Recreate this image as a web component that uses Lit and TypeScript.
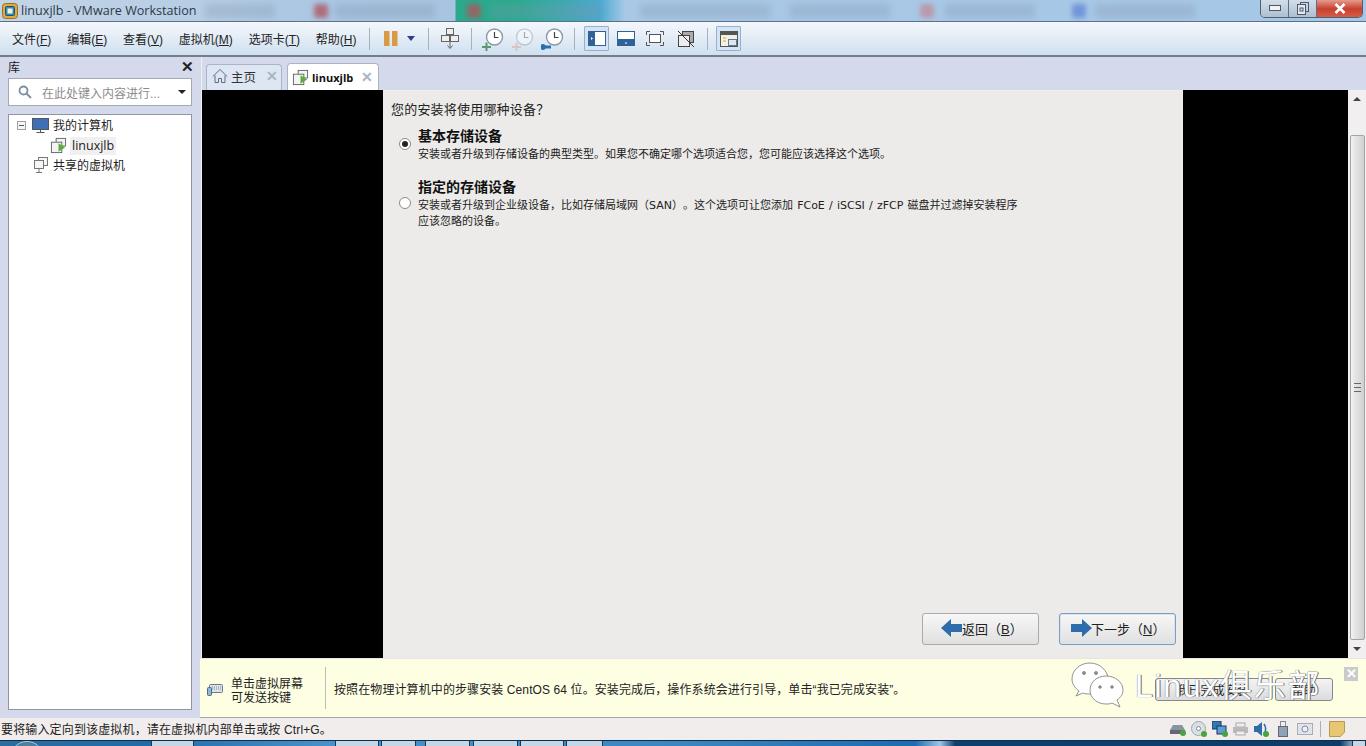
import { LitElement, html, css, svg } from "lit";
import { customElement } from "lit/decorators.js";

const vmIcon = (s = 18) => html`<svg width=${s} height=${s} viewBox="0 0 18 18" fill="none">
  <rect x="6.5" y="1.5" width="10" height="8" fill="#f4f4f4" stroke="#666"/>
  <rect x="1.5" y="5.5" width="11" height="11" fill="#f4f4f4" stroke="#666"/>
  <path d="M9 6.5v9l7-4.5z" fill="#5aaf3c"/>
</svg>`;

const clock = (c: string, badge: unknown, o = 1) => html`<svg width="24" height="24" viewBox="0 0 24 24" fill="none" style=${"opacity:" + o}>
  <circle cx="13.5" cy="10" r="8" fill="#fff" stroke="#8b99a8" stroke-width="1.4"/>
  <path d="M13.5 5v5.5h4" stroke="#444" stroke-width="1.2"/>
  <g stroke=${c} fill=${c}>${badge}</g>
</svg>`;

@customElement("app-root")
export class AppRoot extends LitElement {
  static styles = css`
    :host { display: block; width: 1366px; height: 746px; overflow: hidden; font-family: "Liberation Sans", "Noto Sans CJK SC", sans-serif; font-size: 12px; color: #1a1a1a; text-spacing-trim: space-all; }
    .page { display: flex; flex-direction: column; height: 746px; background: #d4d9ec; }
    .title { height: 21px; flex: none; display: flex; align-items: center; position: relative; overflow: hidden; padding-left: 2px; gap: 3px;
      background: linear-gradient(90deg, #c4d4e6 0, #b6cde4 200px, #a9c6e2 330px, #a8c4e0 455px, #2aa98c 456px, #28ab8e 520px, #4aa9d0 600px, #a9c8e6 625px, #a6c7e6 1260px); border-bottom: 1px solid #5c7086; }
    .app-ico { width: 16px; height: 16px; flex: none; }
    .title-text { font-family: "Open Sans", "Noto Sans", sans-serif; font-size: 12.6px; color: #2c3a48; white-space: nowrap; }
    .blur { position: absolute; top: 4px; height: 14px; border-radius: 3px; background: #7f93ad; opacity: .3; filter: blur(3px); }
    .dot { position: absolute; top: 4px; width: 14px; height: 14px; border-radius: 3px; filter: blur(2.5px); opacity: .75; }
    .winbtns { position: absolute; right: 3px; top: -1px; width: 101px; height: 18px; display: flex; border: 1px solid #4e5f72; border-top: 0; border-radius: 0 0 5px 5px; overflow: hidden; }
    .wb { width: 27px; display: flex; align-items: center; justify-content: center; background: linear-gradient(#d4e0ec, #aebfd1); border-right: 1px solid #5d6f84; }
    .wb.close { flex: 1; border: 0; background: linear-gradient(#e8a598, #c8402e 55%, #d55c48); }
    .toolbar { height: 33px; flex: none; display: flex; align-items: center; padding-left: 12px; background: linear-gradient(#f4f7fd, #ecf2f9 25%, #cfe0f0); border-bottom: 2px solid #777d88; }
    .menu { display: flex; gap: 15.8px; font-size: 12px; color: #222; white-space: nowrap; }
    u { text-underline-offset: 1px; }
    .sep { width: 1px; height: 22px; background: #a3b2c2; flex: none; }
    .tools { display: flex; align-items: center; margin-left: 13px; height: 100%; }
    .tb { width: 24px; height: 24px; display: flex; align-items: center; justify-content: center; flex: none; box-sizing: border-box; }
    .tb.on { width: 25px; height: 25px; background: #d5e4f4; border: 1px solid #97b0cb; border-radius: 1px; }
    .tb.pause { width: 22px; margin-left: 10px; }
    .tb.drop { width: 18px; }
    .tb.gap5 { margin-left: 5px; }
    .tb.gap7 { margin-left: 7px; }
    .tb.gapr { margin-right: 6px; }
    .s8 { margin: 0 9px 0 8px; }
    .s9 { margin: 0 9px; }
    .s9b { margin: 0 8px 0 9px; }
    .drop-arrow { border: 4px solid transparent; border-top: 5px solid #2b3f8a; border-bottom: 0; }
    .body { flex: 1; min-height: 0; display: flex; }
    .side { width: 202px; flex: none; display: flex; flex-direction: column; background: #d4d9ec; border-right: 1px solid #f1f0f0; box-sizing: border-box; padding: 0 9px 8px 8px; }
    .side-head { height: 21px; box-sizing: border-box; padding-bottom: 2px; display: flex; align-items: center; justify-content: space-between; font-size: 12px; margin-right: -2px; }
    .side-x { font-size: 15px; font-weight: 700; color: #222; line-height: 1; }
    .search { height: 28px; box-sizing: border-box; border: 1px solid #a4a8b3; background: #fff; display: flex; align-items: center; padding: 0 5px 0 9px; color: #8b8b8b; gap: 10px; font-size: 12px; margin-bottom: 8px; }
    .search span { flex: 1; white-space: nowrap; }
    .caret { width: 0; height: 0; border: 4px solid transparent; border-top: 4px solid #222; border-bottom: 0; flex: none; }
    .tree { flex: 1; border: 1px solid #8f96a3; background: #fff; padding: 0 0 0 8px; color: #222; }
    .row { height: 20px; display: flex; align-items: center; gap: 4px; white-space: nowrap; }
    .row span { margin-bottom: 2px; }
    .row.sub { padding-left: 33px; }
    .row.sub em { font-style: normal; background: #f0f0f0; padding: 0 2px; margin: 2px 0 0 -1px; font-family: "Open Sans", sans-serif; font-size: 12.5px; line-height: 18px; }
    .row.third { padding-left: 15px; }
    .minus { width: 7px; height: 7px; border: 1px solid #a0a0a0; display: flex; align-items: center; justify-content: center; background: #f6f6f6; margin-right: 2px; flex: none; }
    .minus::after { content: ""; width: 5px; height: 1px; background: #555; }
    .main { flex: 1; min-width: 0; display: flex; flex-direction: column; }
    .tabs { height: 33px; flex: none; display: flex; align-items: flex-end; gap: 5px; padding-left: 4px; background: #d4d9ec; }
    .tab { height: 26px; box-sizing: border-box; display: flex; align-items: center; border: 1px solid #a9b4c6; border-bottom: 0; border-radius: 4px 4px 0 0; background: #dde6f2; padding: 0 3px 3px 5px; gap: 3px; font-size: 12.5px; color: #333; white-space: nowrap; }
    .tab.on { height: 27px; width: 92px; background: #fff; font-weight: 700; font-size: 11px; padding: 0 5px 0 4px; gap: 3px; font-family: "Open Sans", sans-serif; color: #111; }
    .tab b { color: #a9b4c2; font-size: 14px; margin-left: auto; font-weight: 700; font-family: "Liberation Sans", sans-serif; }
    .tab.home { width: 76px; }
    .vmrow { flex: 1; min-height: 0; display: flex; }
    .black { background: #000; flex: none; }
    .b1 { width: 181px; }
    .b2 { width: 165px; }
    .guest { width: 800px; flex: none; box-sizing: border-box; background: #ecebe9; border-top: 1px solid #f3efe9; display: flex; flex-direction: column; padding: 11px 7px 13px 8px; font-size: 12px; }
    .q { font-size: 13px; line-height: 16px; color: #222; letter-spacing: .2px; }
    .opt { display: flex; margin-top: 10px; padding-left: 8px; }
    .opt.two { margin-top: 16px; }
    .radio { width: 12px; height: 12px; box-sizing: border-box; border-radius: 50%; border: 1px solid #8b8b8b; background: #fff; flex: none; display: flex; align-items: center; justify-content: center; margin: 10px 7px 0 0; }
    .opt.two .radio { margin-top: 18px; }
    .radio i { width: 6px; height: 6px; border-radius: 50%; background: #222; }
    .opt h4 { margin: 0; font-size: 14px; line-height: 16px; font-weight: 700; color: #111; }
    .opt p { margin: 3px 0 0; font-family: "DejaVu Sans", "Noto Sans CJK SC", sans-serif; font-size: 11px; word-spacing: .7px; line-height: 16px; color: #222; white-space: nowrap; }
    .btns { margin-top: auto; display: flex; justify-content: flex-end; gap: 20px; }
    .btn { height: 32px; width: 117px; box-sizing: border-box; border: 1px solid #aaa; border-radius: 3px; background: linear-gradient(#f7f7f7, #e0e0e0); display: flex; align-items: center; font-size: 13px; padding: 0 0 2px 18px; color: #222; white-space: nowrap; }
    .btn svg { margin-right: -1px; }
    .btn.next { border-color: #7d9cc0; padding-left: 10px; box-shadow: inset 0 0 0 1px #d8e4f0; }
    .scroll { flex: 1; display: flex; flex-direction: column; background: #f1efef; align-items: center; }
    .sarrow { height: 18px; display: flex; align-items: center; justify-content: center; flex: none; }
    .up { width: 0; height: 0; border: 4px solid transparent; border-bottom: 4px solid #444; border-top: 0; }
    .down { width: 0; height: 0; border: 4px solid transparent; border-top: 4px solid #444; border-bottom: 0; }
    .thumb { margin-top: 27px; flex: 1; width: 15px; border: 1px solid #a4a4a4; border-radius: 2px; background: linear-gradient(90deg, #f3f3f3, #e6e6e6 30%, #d0d0d0); display: flex; align-items: center; justify-content: center; box-sizing: border-box; }
    .grip { width: 7px; height: 7px; border-top: 1px solid #666; border-bottom: 1px solid #666; position: relative; }
    .grip::after { content: ""; position: absolute; left: 0; right: 0; top: 3px; height: 1px; background: #666; }
    .hint { height: 60px; flex: none; box-sizing: border-box; background: #fefee2; border-top: 1px solid #e6e6e0; border-bottom: 1px solid #a5a5a5; display: flex; align-items: center; position: relative; padding-left: 7px; margin-left: -2px; }
    .kb { flex: none; width: 16px; height: 14px; margin: 2px 8px 0 0; }
    .h1 { width: 94px; flex: none; line-height: 14px; font-size: 12px; color: #222; margin-top: 6px; }
    .hsep { width: 1px; height: 42px; background: #bcbcb0; margin-right: 8px; flex: none; }
    .h2 { font-size: 12px; color: #222; white-space: nowrap; letter-spacing: .1px; }
    .mark { position: absolute; left: 871px; top: 2px; display: flex; align-items: center; gap: 8px; }
    .wm { font-size: 32px; color: #fff; white-space: nowrap; letter-spacing: 1.7px; font-weight: 400; text-shadow: 0 0 1px #555, 1px 0 0 #777; line-height: 50px; }
    .hb { position: absolute; top: 19px; height: 23px; box-sizing: border-box; border: 1px solid #888; border-radius: 3px; background: linear-gradient(#f4f4f4, #dcdcdc); font-size: 12px; display: flex; align-items: center; justify-content: center; color: #222; white-space: nowrap; }
    .hb.a { left: 955px; width: 115px; }
    .hb.b { left: 1075px; width: 58px; }
    .hx { position: absolute; left: 1144px; top: 8px; width: 14px; height: 14px; background: #c9cbcb; color: #fff; font: 700 13px/14px "Liberation Sans", sans-serif; text-align: center; }
    .status { height: 22px; flex: none; box-sizing: border-box; background: #f1eded; display: flex; align-items: center; padding: 0 0 1px 1px; font-size: 12px; letter-spacing: .15px; color: #222; white-space: nowrap; }
    .status span { flex: 1; }
    .sicons { display: flex; align-items: center; gap: 5px; padding-right: 21px; }
    .usb { margin: 0 4px; }
    .ssep { height: 16px; margin: 0 3px 0 2px; }
    .task { height: 6px; flex: none; position: relative; overflow: hidden; background: linear-gradient(90deg, #2c6d9f, #206ba8 150px, #4993cc 335px, #3a86c2 680px, #1d6bb0 915px, #9cc6e6 940px, #0e3f6c 955px, #0e3f6c 1000px, #0d3c69 1340px, #7893ab 1350px); border-top: 1px solid #0f2e49; box-sizing: border-box; }
    .orb { position: absolute; left: 10px; top: 0; width: 32px; height: 32px; border-radius: 50%; background: radial-gradient(#e87a3a, #3a7fa8 70%); border: 1px solid #a9c8de; }
    .tk { position: absolute; top: 0; height: 6px; background: #c5d6e4; border-left: 1px solid #1b3850; border-right: 1px solid #1b3850; box-sizing: border-box; }
    .ww { flex: none; }
  `;

  render() {
    const menus: [string, string][] = [["文件", "F"], ["编辑", "E"], ["查看", "V"], ["虚拟机", "M"], ["选项卡", "T"], ["帮助", "H"]];
    const blurs = [[205, 70], [335, 100], [490, 110], [640, 130], [790, 100], [945, 90], [1095, 100]];
    const dots: [number, string][] = [[314, "#b0505a"], [467, "#b8505a"], [920, "#c08a98"], [1072, "#5f86d6"]];
    const tks = [[151, 43], [335, 44], [381, 35], [425, 45], [473, 45], [520, 44], [566, 37], [1352, 14]];
    return html`<div class="page">
      <div class="title">
        <svg class="app-ico" viewBox="0 0 16 16"><rect x=".5" y=".5" width="15" height="15" rx="3" fill="#e4a93a" stroke="#94712c"/><rect x="3.5" y="3.5" width="9" height="9" rx="1" fill="#2c8fb8" stroke="#24506e"/><rect x="5.5" y="5.5" width="5" height="5" fill="#f2f2e0"/></svg>
        <span class="title-text">linuxjlb - VMware Workstation</span>
        ${blurs.map(([l, w]) => html`<div class="blur" style="left:${l}px;width:${w}px"></div>`)}
        ${dots.map(([l, c]) => html`<div class="dot" style="left:${l}px;background:${c}"></div>`)}
        <div class="winbtns">
          <div class="wb"><svg width="12" height="6"><rect x=".5" y=".5" width="11" height="5" fill="#f2f2f2" stroke="#4b5968"/></svg></div>
          <div class="wb"><svg width="12" height="13" viewBox="0 0 12 13" fill="none" stroke="#4b5968"><rect x="3.5" y=".5" width="8" height="9"/><rect x=".5" y="2.5" width="8" height="10" fill="#e3e8ee"/><rect x="3" y="6" width="3" height="3"/></svg></div>
          <div class="wb close"><svg width="12" height="11" viewBox="0 0 12 11"><path d="M1.5 1 10.5 10M10.5 1 1.5 10" stroke="#fff" stroke-width="2.6"/></svg></div>
        </div>
      </div>
      <div class="toolbar">
        <div class="menu">${menus.map(([t, k]) => html`<span>${t}(<u>${k}</u>)</span>`)}</div>
        <div class="tools">
          <div class="sep"></div>
          <div class="tb pause"><svg width="14" height="15"><rect x="0" y="0" width="5.5" height="15" fill="#d99a45"/><rect x="8" y="0" width="5.5" height="15" fill="#d99a45"/></svg></div>
          <div class="tb drop"><div class="drop-arrow"></div></div>
          <div class="sep s8"></div>
          <div class="tb"><svg width="20" height="22" viewBox="0 0 20 22" fill="none" stroke="#666"><rect x="6.5" y=".5" width="7" height="6" fill="#eee"/><rect x="1.5" y="7.5" width="8" height="6" fill="#eee"/><rect x="10.5" y="7.5" width="8" height="6" fill="#eee"/><path d="M10 14v6M7.500 17.500l2.500 3 2.500-3"/></svg></div>
          <div class="sep s9"></div>
          <div class="tb gapr">${clock("#5a9a6a", svg`<path d="M1 20h9M5.500 15.500v9" stroke-width="2"/>`)}</div>
          <div class="tb gapr">${clock("#d89870", svg`<path d="M1 20h9M5.500 15.500v9" stroke-width="2"/>`, .4)}</div>
          <div class="tb">${clock("#2a6eb0", svg`<path d="M1 20h9" stroke-width="3"/><circle cx="2" cy="20" r="2.500"/>`)}</div>
          <div class="sep s9"></div>
          <div class="tb on"><svg width="18" height="15"><rect x=".5" y=".5" width="17" height="14" fill="#fff" stroke="#2f6296"/><rect width="7" height="15" fill="#2f6296"/><path d="M3 6v3l2-1.500z" fill="#fff"/></svg></div>
          <div class="tb gap5"><svg width="18" height="15"><rect x=".5" y=".5" width="17" height="14" fill="#fff" stroke="#2f6296"/><rect y="8" width="18" height="7" fill="#2f6296"/><path d="M7.500 12.500h3L9 11z" fill="#fff"/></svg></div>
          <div class="tb gap5"><svg width="18" height="15" fill="none" stroke="#555"><rect x="3.500" y="3.500" width="11" height="8" fill="#fff"/><path d="M.5 4V.5H4M14 .5h3.500V4M17.500 11v3.500H14M4 14.500H.5V11"/></svg></div>
          <div class="tb gap7"><svg width="18" height="18" fill="none" stroke="#444"><rect x="5.500" y="1.500" width="11" height="11" fill="#aaa"/><rect x="1.500" y="5.500" width="11" height="11" fill="#eee"/><path d="M1 1l16 16" stroke="#333"/></svg></div>
          <div class="sep s9b"></div>
          <div class="tb on"><svg width="18" height="16" fill="none"><rect x=".5" y=".5" width="17" height="15" fill="#f4f0e2" stroke="#555"/><rect x="1" y="1" width="16" height="3" fill="#555"/><rect x="8.500" y="8.500" width="8" height="6" fill="#dfe6ee" stroke="#5b7a99"/><path d="M3 7h3M3 10h3" stroke="#d4a44a"/></svg></div>
        </div>
      </div>
      <div class="body">
        <div class="side">
          <div class="side-head"><span>库</span><span class="side-x">✕</span></div>
          <div class="search">
            <svg width="14" height="14" viewBox="0 0 14 14" fill="none" stroke="#7c8ea3" stroke-width="1.800"><circle cx="5.500" cy="5.500" r="4"/><path d="M8.500 8.500 13 13"/></svg>
            <span>在此处键入内容进行...</span><div class="caret"></div>
          </div>
          <div class="tree">
            <div class="row"><div class="minus"></div><svg width="17" height="17" viewBox="0 0 17 17"><rect x=".5" y="1.500" width="16" height="11" fill="#3f6fb5" stroke="#555"/><path d="M8.500 12.500v3M4.500 15.500h8" stroke="#555"/></svg><span>我的计算机</span></div>
            <div class="row sub">${vmIcon(17)}<em>linuxjlb</em></div>
            <div class="row third"><svg width="17" height="18" viewBox="0 0 17 18" fill="none" stroke="#777"><rect x="6.500" y="1.500" width="9" height="8" fill="#f6f6f6"/><rect x="2.500" y="4.500" width="9" height="8" fill="#f6f6f6"/><path d="M7 12.500v4M4 16.500h6"/></svg><span>共享的虚拟机</span></div>
          </div>
        </div>
        <div class="main">
          <div class="tabs">
            <div class="tab home"><svg width="16" height="16" viewBox="0 0 16 16" fill="none" stroke="#5d6e80"><path d="M.8 8.500 8 1.500l7.200 7M3 7.500v7h3.500v-4h3v4H13v-7"/></svg><span>主页</span><b>✕</b></div>
            <div class="tab on">${vmIcon(17)}<span>linuxjlb</span><b>✕</b></div>
          </div>
          <div class="vmrow">
            <div class="black b1"></div>
            <div class="guest">
              <div class="q">您的安装将使用哪种设备？</div>
              <div class="opt"><div class="radio"><i></i></div><div><h4>基本存储设备</h4><p>安装或者升级到存储设备的典型类型。如果您不确定哪个选项适合您，您可能应该选择这个选项。</p></div></div>
              <div class="opt two"><div class="radio"></div><div><h4>指定的存储设备</h4><p>安装或者升级到企业级设备，比如存储局域网（SAN）。这个选项可让您添加 FCoE / iSCSI / zFCP 磁盘并过滤掉安装程序<br>应该忽略的设备。</p></div></div>
              <div class="btns">
                <div class="btn back"><svg width="22" height="20" viewBox="0 0 22 20"><path d="M0 10 10 1v5h11v8H10v5z" fill="#2f6cab"/></svg><span>返回（<u>B</u>）</span></div>
                <div class="btn next"><svg width="22" height="20" viewBox="0 0 22 20"><path d="M22 10 12 1v5H1v8h11v5z" fill="#2f6cab"/></svg><span>下一步（<u>N</u>）</span></div>
              </div>
            </div>
            <div class="black b2"></div>
            <div class="scroll">
              <div class="sarrow"><div class="up"></div></div>
              <div class="thumb"><div class="grip"></div></div>
              <div class="sarrow"><div class="down"></div></div>
            </div>
          </div>
          <div class="hint">
            <svg class="kb" viewBox="0 0 16 14"><rect x="2.500" y="2.500" width="13" height="8" rx="1" fill="#dde3e8" stroke="#6b7b8a"/><rect x=".5" y="5.500" width="4" height="8" rx="1" fill="#8fb7d6" stroke="#4a6b88"/><path d="M5 5h9M5 7h9" stroke="#7f8e9c" stroke-dasharray="1 1"/></svg>
            <div class="h1">单击虚拟屏幕<br>可发送按键</div>
            <div class="hsep"></div>
            <div class="h2">按照在物理计算机中的步骤安装 CentOS 64 位。安装完成后，操作系统会进行引导，单击“我已完成安装”。</div>
            <div class="hb a">我已完成安装</div>
            <div class="hb b">帮助</div>
            <div class="mark">
              <svg class="ww" width="56" height="48" viewBox="0 0 56 48" fill="#fff" stroke="#777" stroke-width=".8">
                <path d="M19 1C9 1 1 8 1 17c0 5 3 9 7 12l-3 5 7-3c2 1 5 1 7 1 10 0 18-7 18-15S29 1 19 1z"/>
                <path d="M35 14c-9 0-16 6-16 14s7 14 16 14c2 0 4 0 6-1l8 4-3-7c4-3 6-6 6-10 0-8-8-14-17-14z"/>
                <circle cx="13" cy="11" r="1.500" fill="#999"/><circle cx="25" cy="11" r="1.500" fill="#999"/><circle cx="29" cy="25" r="1.300" fill="#999"/><circle cx="41" cy="25" r="1.300" fill="#999"/>
              </svg>
              <span class="wm">Linux俱乐部</span>
            </div>
            <div class="hx">✕</div>
          </div>
        </div>
      </div>
      <div class="status">
        <span>要将输入定向到该虚拟机，请在虚拟机内部单击或按 Ctrl+G。</span>
        <div class="sicons">
          <svg width="16" height="14" viewBox="0 0 16 14"><path d="M3 3h9l3 5v4H0V8z" fill="#8a94a0"/><rect x="0" y="8" width="15" height="4" fill="#667"/><circle cx="13" cy="11" r="3" fill="#4aa33c"/></svg>
          <svg width="16" height="16" viewBox="0 0 16 16"><circle cx="7.500" cy="7.500" r="7" fill="#d8e0e6" stroke="#9aa"/><circle cx="7.500" cy="7.500" r="2" fill="#fff" stroke="#889"/><circle cx="13" cy="13" r="3" fill="#4aa33c"/></svg>
          <svg width="16" height="16" viewBox="0 0 16 16"><rect x="0" y="0" width="9" height="8" fill="#2e7ab8" stroke="#235"/><rect x="5" y="5" width="9" height="8" fill="#5aa0d8" stroke="#235"/><circle cx="13" cy="13" r="3" fill="#4aa33c"/></svg>
          <svg width="15" height="14" viewBox="0 0 15 14"><rect x="3" y="1" width="9" height="4" fill="#eee" stroke="#aaa"/><rect x="0" y="5" width="15" height="6" fill="#bbb"/><rect x="3" y="9" width="9" height="4" fill="#eee" stroke="#aaa"/></svg>
          <svg width="16" height="16" viewBox="0 0 16 16"><path d="M1 5h3l5-4v14l-5-4H1z" fill="#2d6ea8"/><path d="M11 3c2 3 2 7 0 10" stroke="#2d6ea8" fill="none" stroke-width="1.500"/><circle cx="13" cy="13" r="3" fill="#4aa33c"/></svg>
          <svg class="usb" width="10" height="16" viewBox="0 0 10 16"><rect x="2.500" y=".5" width="5" height="5" fill="#eee" stroke="#889"/><rect x=".5" y="5.500" width="9" height="10" fill="#8ea2b8" stroke="#667"/></svg>
          <svg width="16" height="12" viewBox="0 0 16 12"><rect x=".5" y=".5" width="15" height="11" fill="#dfe4e8" stroke="#aab"/><circle cx="8" cy="6" r="3" fill="#eef" stroke="#889"/></svg>
          <div class="sep ssep"></div>
          <svg width="16" height="16" viewBox="0 0 16 16"><path d="M.5.5h15V11l-4 4.500H.5z" fill="#e7c773" stroke="#b69a50"/></svg>
        </div>
      </div>
      <div class="task">
        <div class="orb"></div>
        ${tks.map(([l, w]) => html`<div class="tk" style="left:${l}px;width:${w}px"></div>`)}
      </div>
    </div>`;
  }
}
